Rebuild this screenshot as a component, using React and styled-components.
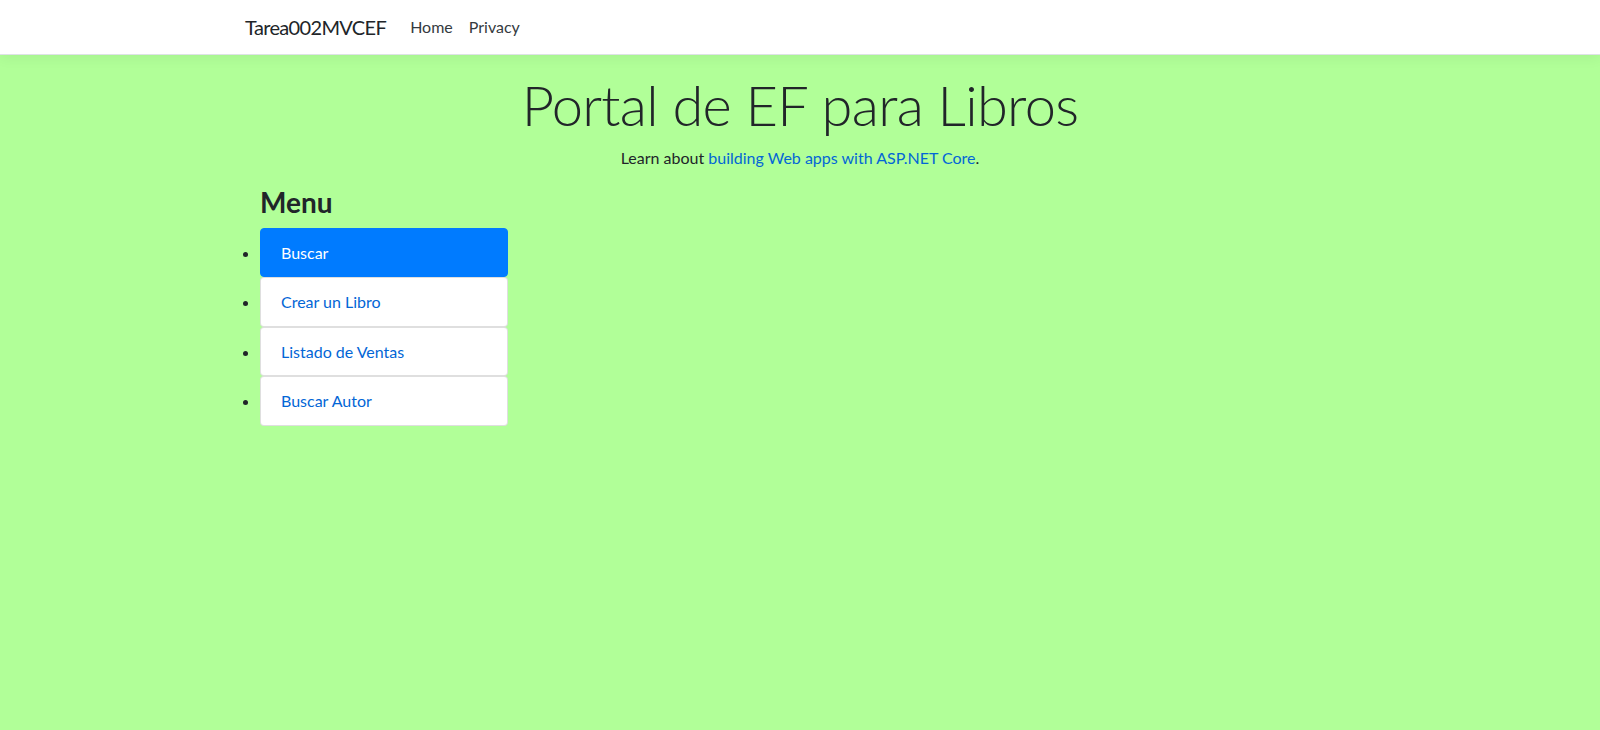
import styled, { createGlobalStyle } from "styled-components";

const GlobalStyle = createGlobalStyle`
  html, body {
    margin: 0;
    padding: 0;
  }

  body {
    background-color: #b1ff98;
    font-family: "Segoe UI", Lato, "Noto Sans", sans-serif;
    font-size: 16px;
    line-height: 1.5;
    color: #212529;
    min-height: 730px;
  }

  * {
    box-sizing: border-box;
  }
`;

const Header = styled.header`
  background: #fff;
  border-bottom: 1px solid #dee2e6;
  box-shadow: 0 0.25rem 0.75rem rgba(0, 0, 0, 0.05);
  margin-bottom: 16px;
`;

const NavBar = styled.nav`
  max-width: 1140px;
  height: 54px;
  margin: 0 auto;
  padding: 0 15px;
  display: flex;
  align-items: center;
`;

const Brand = styled.a`
  font-size: 20px;
  letter-spacing: -0.65px;
  color: #212529;
  text-decoration: none;
  margin-right: 16px;
  line-height: 30px;
`;

const NavLink = styled.a`
  color: #343a40;
  text-decoration: none;
  padding: 8px;
  font-size: 16px;
`;

const Container = styled.main`
  max-width: 1140px;
  margin: 0 auto;
  padding: 0 15px;
`;

const Hero = styled.div`
  text-align: center;
`;

const Title = styled.h1`
  font-size: 56px;
  font-weight: 300;
  letter-spacing: -0.7px;
  line-height: 1.2;
  margin: 0 0 8px;
`;

const Lead = styled.p`
  margin: 0 0 16px;
`;

const Link = styled.a`
  color: #0366d6;
  text-decoration: none;
`;

const MenuCol = styled.div`
  width: 277.5px;
  padding: 0 15px;
`;

const MenuTitle = styled.h3`
  font-size: 28px;
  font-weight: 700;
  line-height: 1.2;
  margin: 0 0 8px;
`;

const MenuList = styled.ul`
  margin: 0;
  padding: 0;
  display: flex;
  flex-direction: column;
`;

const MenuItem = styled.li`
  list-style: disc outside;
  color: #212529;
  background: ${({ $active }) => ($active ? "#007bff" : "#fff")};
  border: 1px solid ${({ $active }) => ($active ? "#007bff" : "rgba(0, 0, 0, 0.125)")};
  border-radius: 4px;

  a {
    display: block;
    padding: 11.75px 20px;
    color: ${({ $active }) => ($active ? "#fff" : "#0366d6")};
    text-decoration: none;
  }
`;

const items = ["Buscar", "Crear un Libro", "Listado de Ventas", "Buscar Autor"];

export default function App() {
  return (
    <>
      <GlobalStyle />
      <Header>
        <NavBar>
          <Brand href="#">Tarea002MVCEF</Brand>
          <NavLink href="#">Home</NavLink>
          <NavLink href="#">Privacy</NavLink>
        </NavBar>
      </Header>
      <Container>
        <Hero>
          <Title>Portal de EF para Libros</Title>
          <Lead>
            Learn about <Link href="#">building Web apps with ASP.NET Core</Link>.
          </Lead>
        </Hero>
        <MenuCol>
          <MenuTitle>Menu</MenuTitle>
          <MenuList>
            {items.map((label, i) => (
              <MenuItem key={label} $active={i === 0}>
                <a href="#">{label}</a>
              </MenuItem>
            ))}
          </MenuList>
        </MenuCol>
      </Container>
    </>
  );
}
